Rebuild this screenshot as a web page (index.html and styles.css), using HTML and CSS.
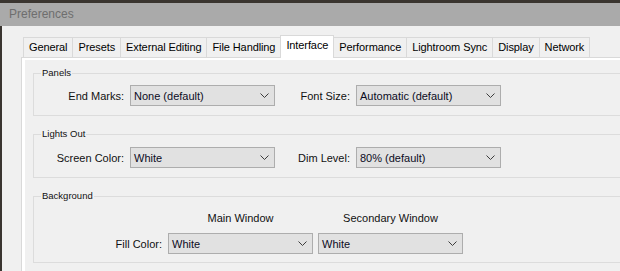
FILE: index.html
```html
<!DOCTYPE html>
<html>
<head>
<meta charset="utf-8">
<link rel="stylesheet" href="styles.css">
</head>
<body>
<div class="desktop"></div>
<div class="titlebar">Preferences</div>
<div class="window">
  <div class="tabs">
    <div class="tab">General</div>
    <div class="tab">Presets</div>
    <div class="tab">External Editing</div>
    <div class="tab">File Handling</div>
    <div class="tab active">Interface</div>
    <div class="tab">Performance</div>
    <div class="tab">Lightroom Sync</div>
    <div class="tab">Display</div>
    <div class="tab">Network</div>
  </div>
  <div class="panel">
    <div class="page">
      <fieldset class="group g-panels">
        <legend>Panels</legend>
        <div class="row">
          <span class="label l1">End Marks:</span>
          <div class="select"><span>None (default)</span><svg class="chev" width="9" height="5" viewBox="0 0 9 5"><polyline points="0.5,0.5 4.5,4.5 8.5,0.5" fill="none" stroke="#3c3c3c" stroke-width="1"/></svg></div>
          <span class="label l2">Font Size:</span>
          <div class="select"><span>Automatic (default)</span><svg class="chev" width="9" height="5" viewBox="0 0 9 5"><polyline points="0.5,0.5 4.5,4.5 8.5,0.5" fill="none" stroke="#3c3c3c" stroke-width="1"/></svg></div>
        </div>
      </fieldset>
      <fieldset class="group g-lights">
        <legend>Lights Out</legend>
        <div class="row">
          <span class="label l1">Screen Color:</span>
          <div class="select"><span>White</span><svg class="chev" width="9" height="5" viewBox="0 0 9 5"><polyline points="0.5,0.5 4.5,4.5 8.5,0.5" fill="none" stroke="#3c3c3c" stroke-width="1"/></svg></div>
          <span class="label l2">Dim Level:</span>
          <div class="select"><span>80% (default)</span><svg class="chev" width="9" height="5" viewBox="0 0 9 5"><polyline points="0.5,0.5 4.5,4.5 8.5,0.5" fill="none" stroke="#3c3c3c" stroke-width="1"/></svg></div>
        </div>
      </fieldset>
      <fieldset class="group g-bg">
        <legend>Background</legend>
        <div class="row heads">
          <span class="label l3"></span>
          <span class="head">Main Window</span>
          <span class="head second">Secondary Window</span>
        </div>
        <div class="row">
          <span class="label l3">Fill Color:</span>
          <div class="select"><span>White</span><svg class="chev" width="9" height="5" viewBox="0 0 9 5"><polyline points="0.5,0.5 4.5,4.5 8.5,0.5" fill="none" stroke="#3c3c3c" stroke-width="1"/></svg></div>
          <div class="select second"><span>White</span><svg class="chev" width="9" height="5" viewBox="0 0 9 5"><polyline points="0.5,0.5 4.5,4.5 8.5,0.5" fill="none" stroke="#3c3c3c" stroke-width="1"/></svg></div>
        </div>
      </fieldset>
    </div>
  </div>
</div>
</body>
</html>
```
FILE: styles.css
```css
html, body {
  margin: 0;
  padding: 0;
}
body {
  width: 620px;
  height: 271px;
  overflow: hidden;
  background: #f0f0f0;
  font-family: "Liberation Sans", Arial, sans-serif;
  font-size: 11px;
  color: #111;
}
.desktop {
  height: 3px;
  background: #3a3530;
}
.titlebar {
  height: 23px;
  box-sizing: border-box;
  background: #aaaaaa;
  color: #6e6e6e;
  font-size: 12px;
  line-height: 22px;
  padding-left: 9px;
}
.window {
  height: 245px;
  box-sizing: border-box;
  border-left: 2px solid #3a3530;
  padding-left: 19px;
  display: flex;
  flex-direction: column;
  overflow: hidden;
  background: #f0f0f0;
}
.tabs {
  display: flex;
  align-items: flex-end;
  margin-top: 9px;
  padding-left: 2px;
}
.tab {
  height: 19px;
  line-height: 19px;
  padding: 0 5px 0 5px;
  border: 1px solid #d9d9d9;
  border-bottom: none;
  margin-right: -1px;
  background: #f0f0f0;
  white-space: nowrap;
  letter-spacing: -0.1px;
  color: #000;
}
.tab.active {
  height: 22px;
  line-height: 19px;
  background: #fff;
  margin-bottom: -1px;
  position: relative;
  z-index: 1;
}
.panel {
  flex: 1;
  border-top: 1px solid #d9d9d9;
  border-left: 1px solid #d9d9d9;
  background: #fff;
  padding: 2px 0 0 3px;
  display: flex;
}
.page {
  flex: 1;
  background: #f0f0f0;
  padding: 7px 0 0 8px;
}
.group {
  width: 640px;
  margin: 0 0 12px 0;
  padding: 6px 0 9px 0;
  border: 1px solid #dcdcdc;
  box-sizing: border-box;
}
.group legend {
  font-size: 9.5px;
  line-height: 12px;
  padding: 0 1px;
  margin-left: 7px;
  color: #111;
}
.g-lights {
  padding-top: 7px;
  padding-bottom: 9px;
  margin-bottom: 12px;
}
.g-bg {
  padding-top: 8px;
  padding-bottom: 8px;
}
.row {
  display: flex;
  align-items: center;
}
.label {
  text-align: right;
  margin-right: 6px;
  white-space: nowrap;
}
.l1 { width: 90px; }
.l2 { width: 75px; }
.l3 { width: 128px; }
.select {
  width: 145px;
  height: 21px;
  box-sizing: border-box;
  border: 1px solid #adadad;
  background: #e1e1e1;
  display: flex;
  align-items: center;
  justify-content: space-between;
  padding: 0 5px 0 3px;
  color: #0c0c1e;
}
.chev {
  display: block;
}
.select.second {
  margin-left: 5px;
}
.heads {
  height: 16px;
  margin-bottom: 7px;
}
.head {
  width: 145px;
  text-align: center;
}
.head.second {
  margin-left: 5px;
}
```
